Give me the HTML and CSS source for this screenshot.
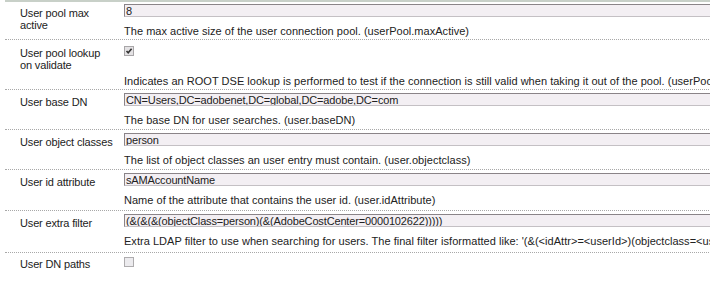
FILE: index.html
```html
<!doctype html>
<html>
<head>
  <title>LDAP user settings</title>
  <meta charset='UTF-8'>
  <link rel="stylesheet" href="styles.css">
</head>
<body>
  <main class="config">
    <div class="row first">
      <div class="label">User pool max active</div>
      <div class="field">
        <div class="input">8</div>
        <div class="desc">The max active size of the user connection pool. (userPool.maxActive)</div>
      </div>
    </div>
    <div class="row tall">
      <div class="label">User pool lookup on validate</div>
      <div class="field">
        <div class="check-line">
          <svg class="check" width="10" height="10" viewBox="0 0 10 10">
            <rect x="0.5" y="0.5" width="9" height="9" fill="#e4e2e4" stroke="#a8a6a8"/>
            <path d="M2.5 5 L4.2 6.8 L7.6 2.8" fill="none" stroke="#333" stroke-width="1.6"/>
          </svg>
        </div>
        <div class="desc">Indicates an ROOT DSE lookup is performed to test if the connection is still valid when taking it out of the pool. (userPool.lookupOnValidate)</div>
      </div>
    </div>
    <div class="row">
      <div class="label">User base DN</div>
      <div class="field">
        <div class="input">CN=Users,DC=adobenet,DC=global,DC=adobe,DC=com</div>
        <div class="desc">The base DN for user searches. (user.baseDN)</div>
      </div>
    </div>
    <div class="row">
      <div class="label">User object classes</div>
      <div class="field">
        <div class="input">person</div>
        <div class="desc">The list of object classes an user entry must contain. (user.objectclass)</div>
      </div>
    </div>
    <div class="row plus">
      <div class="label">User id attribute</div>
      <div class="field">
        <div class="input">sAMAccountName</div>
        <div class="desc">Name of the attribute that contains the user id. (user.idAttribute)</div>
      </div>
    </div>
    <div class="row plus2">
      <div class="label">User extra filter</div>
      <div class="field">
        <div class="input">(&amp;(&amp;(&amp;(objectClass=person)(&amp;(AdobeCostCenter=0000102622)))))</div>
        <div class="desc">Extra LDAP filter to use when searching for users. The final filter isformatted like: '(&amp;(&lt;idAttr&gt;=&lt;userId&gt;)(objectclass=&lt;userObjectclass&gt;)&lt;extraFilter&gt;)' (user.extraFilter)</div>
      </div>
    </div>
    <div class="row last">
      <div class="label">User DN paths</div>
      <div class="field">
        <svg class="check" width="10" height="10" viewBox="0 0 10 10">
          <rect x="0.5" y="0.5" width="9" height="9" fill="#ecebee" stroke="#aeacae"/>
        </svg>
      </div>
    </div>
  </main>
</body>
</html>
```

FILE: styles.css
```css
html, body {
  margin: 0;
  overflow: hidden;
  background: #fff }
body {
  font: 11px/12px 'Liberation Sans', Arial, sans-serif;
  color: #222 }
.config {
  margin-left: 5px;
  width: 760px;
  border-top: 2px solid #c8d0c8 }
  .row {
    display: grid;
    grid-template-columns: 104px 1fr;
    padding: 3px 0 3px 15px;
    border-bottom: 1px dotted #a8a8a8;
    height: 33px }
  .row.first {
    padding-top: 2px;
    height: 32px }
  .row.tall {
    padding-top: 4px;
    height: 42px }
  .row.plus { height: 34px }
  .row.plus2 { height: 35px }
  .row.last {
    border-bottom: 0;
    padding-top: 2px }
    .label {
      padding: 3px 11px 0 0;
      letter-spacing: -0.15px }
    .input {
      height: 11px;
      width: 640px;
      padding: 0 1px;
      line-height: 12px;
      letter-spacing: -0.15px;
      white-space: nowrap;
      overflow: hidden;
      background: #f3eff3;
      border: 1px solid #c4c0c4;
      border-top-color: #8a8488;
      border-left-color: #8a8488 }
    .desc {
      margin-top: 7px;
      white-space: nowrap;
      letter-spacing: 0.03px;
      line-height: 14px }
    .check-line { height: 21px }
    .check {
      display: block;
      margin-top: 2px }
```
